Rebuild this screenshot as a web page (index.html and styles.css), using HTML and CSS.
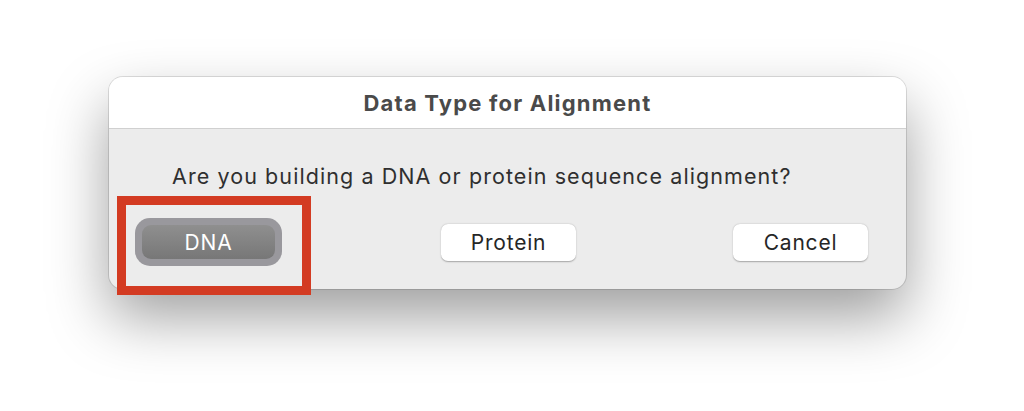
FILE: index.html
```html
<!DOCTYPE html>
<html>
<head>
<meta charset="utf-8">
<link rel="stylesheet" href="styles.css">
</head>
<body>
<div class="stage">
  <div class="dialog">
    <div class="titlebar">Data Type for Alignment</div>
    <div class="content">
      <p class="message">Are you building a DNA or protein sequence alignment?</p>
      <div class="buttons">
        <div class="btn-default-ring"><button class="btn btn-default">DNA</button></div>
        <button class="btn btn-plain btn-protein">Protein</button>
        <button class="btn btn-plain btn-cancel">Cancel</button>
      </div>
    </div>
  </div>
  <div class="highlight"></div>
</div>
</body>
</html>
```
FILE: styles.css
```css
html, body {
  margin: 0;
  padding: 0;
  background: #ffffff;
}
body {
  width: 1024px;
  height: 411px;
  overflow: hidden;
  font-family: Inter, "Liberation Sans", sans-serif;
}
.stage {
  position: relative;
  padding: 77px 0 0 109px;
}
.dialog {
  width: 797px;
  height: 212px;
  box-sizing: border-box;
  border-radius: 14px;
  background: #ececec;
  overflow: hidden;
  box-shadow: 0 28px 60px rgba(0,0,0,0.38), 0 0 0 1px rgba(0,0,0,0.12);
}
.titlebar {
  height: 52px;
  box-sizing: border-box;
  background: #ffffff;
  border-bottom: 1px solid #d0d0d0;
  display: flex;
  align-items: center;
  justify-content: center;
  font-weight: 700;
  font-size: 22px;
  letter-spacing: 1.2px;
  color: #4a4a4a;
  padding-top: 1px;
}
.content {
  padding-top: 30px;
}
.message {
  margin: 0 0 0 63px;
  font-size: 21.5px;
  letter-spacing: 1.08px;
  color: #2f2f2f;
  line-height: 34px;
}
.buttons {
  display: flex;
  align-items: center;
  padding-left: 26px;
  margin-top: 25px;
}
.btn {
  font-family: inherit;
  font-size: 21px;
  letter-spacing: 0.8px;
  border: none;
  padding: 0;
  margin: 0;
  cursor: default;
}
.btn-default-ring {
  width: 147px;
  height: 48px;
  box-sizing: border-box;
  padding: 7px;
  border-radius: 15px;
  background: #99989d;
}
.btn-default {
  width: 100%;
  height: 100%;
  border-radius: 9px;
  background: linear-gradient(#8f8f8f, #777777);
  color: #ffffff;
}
.btn-plain {
  width: 135px;
  height: 37px;
  border-radius: 7px;
  background: #ffffff;
  color: #262626;
  box-shadow: 0 0.5px 1.5px rgba(0,0,0,0.3);
}
.btn-protein {
  margin-left: 159px;
}
.btn-cancel {
  margin-left: 157px;
}
.highlight {
  position: absolute;
  left: 117px;
  top: 196px;
  width: 194px;
  height: 99px;
  box-sizing: border-box;
  border: 9px solid #d33b22;
}
```
